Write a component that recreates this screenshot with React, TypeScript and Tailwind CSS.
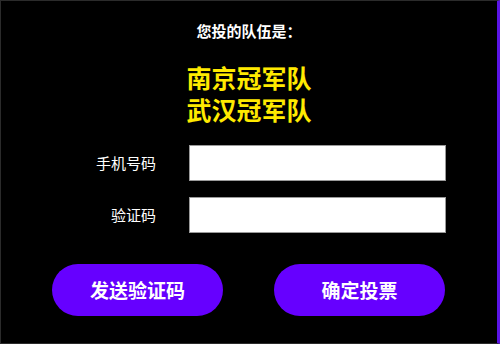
export default function App() {
  return (
    <div
      className="w-[500px] h-[344px] bg-black border border-[#2b2b2b] border-r-[3px] border-r-[#5a14e6] box-border flex flex-col"
      style={{ fontFamily: '"Noto Sans CJK SC", "Noto Sans", sans-serif' }}
    >
      <div className="pt-[20px] text-center text-white text-[15px] leading-[20px] font-bold">
        您投的队伍是：
      </div>

      <div className="mt-[21px] flex flex-col items-center gap-[2px] text-[#ffea00] text-[25px] leading-[30px] font-bold">
        <span>南京冠军队</span>
        <span>武汉冠军队</span>
      </div>

      <div className="mt-[21px] flex flex-col gap-[16px] pl-[51px]">
        <div className="flex items-center">
          <label className="w-[104px] text-right text-white text-[15px]">手机号码</label>
          <input className="ml-[33px] w-[257px] h-[36px] bg-white border border-[#9a9a9a] outline-none" />
        </div>
        <div className="flex items-center">
          <label className="w-[104px] text-right text-white text-[15px]">验证码</label>
          <input className="ml-[33px] w-[257px] h-[36px] bg-white border border-[#9a9a9a] outline-none" />
        </div>
      </div>

      <div className="mt-[31px] flex gap-[51px] pl-[51px]">
        <button className="w-[171px] h-[52px] rounded-full bg-[#6600ff] text-white text-[19px] font-bold">
          发送验证码
        </button>
        <button className="w-[171px] h-[52px] rounded-full bg-[#6600ff] text-white text-[19px] font-bold">
          确定投票
        </button>
      </div>
    </div>
  );
}
